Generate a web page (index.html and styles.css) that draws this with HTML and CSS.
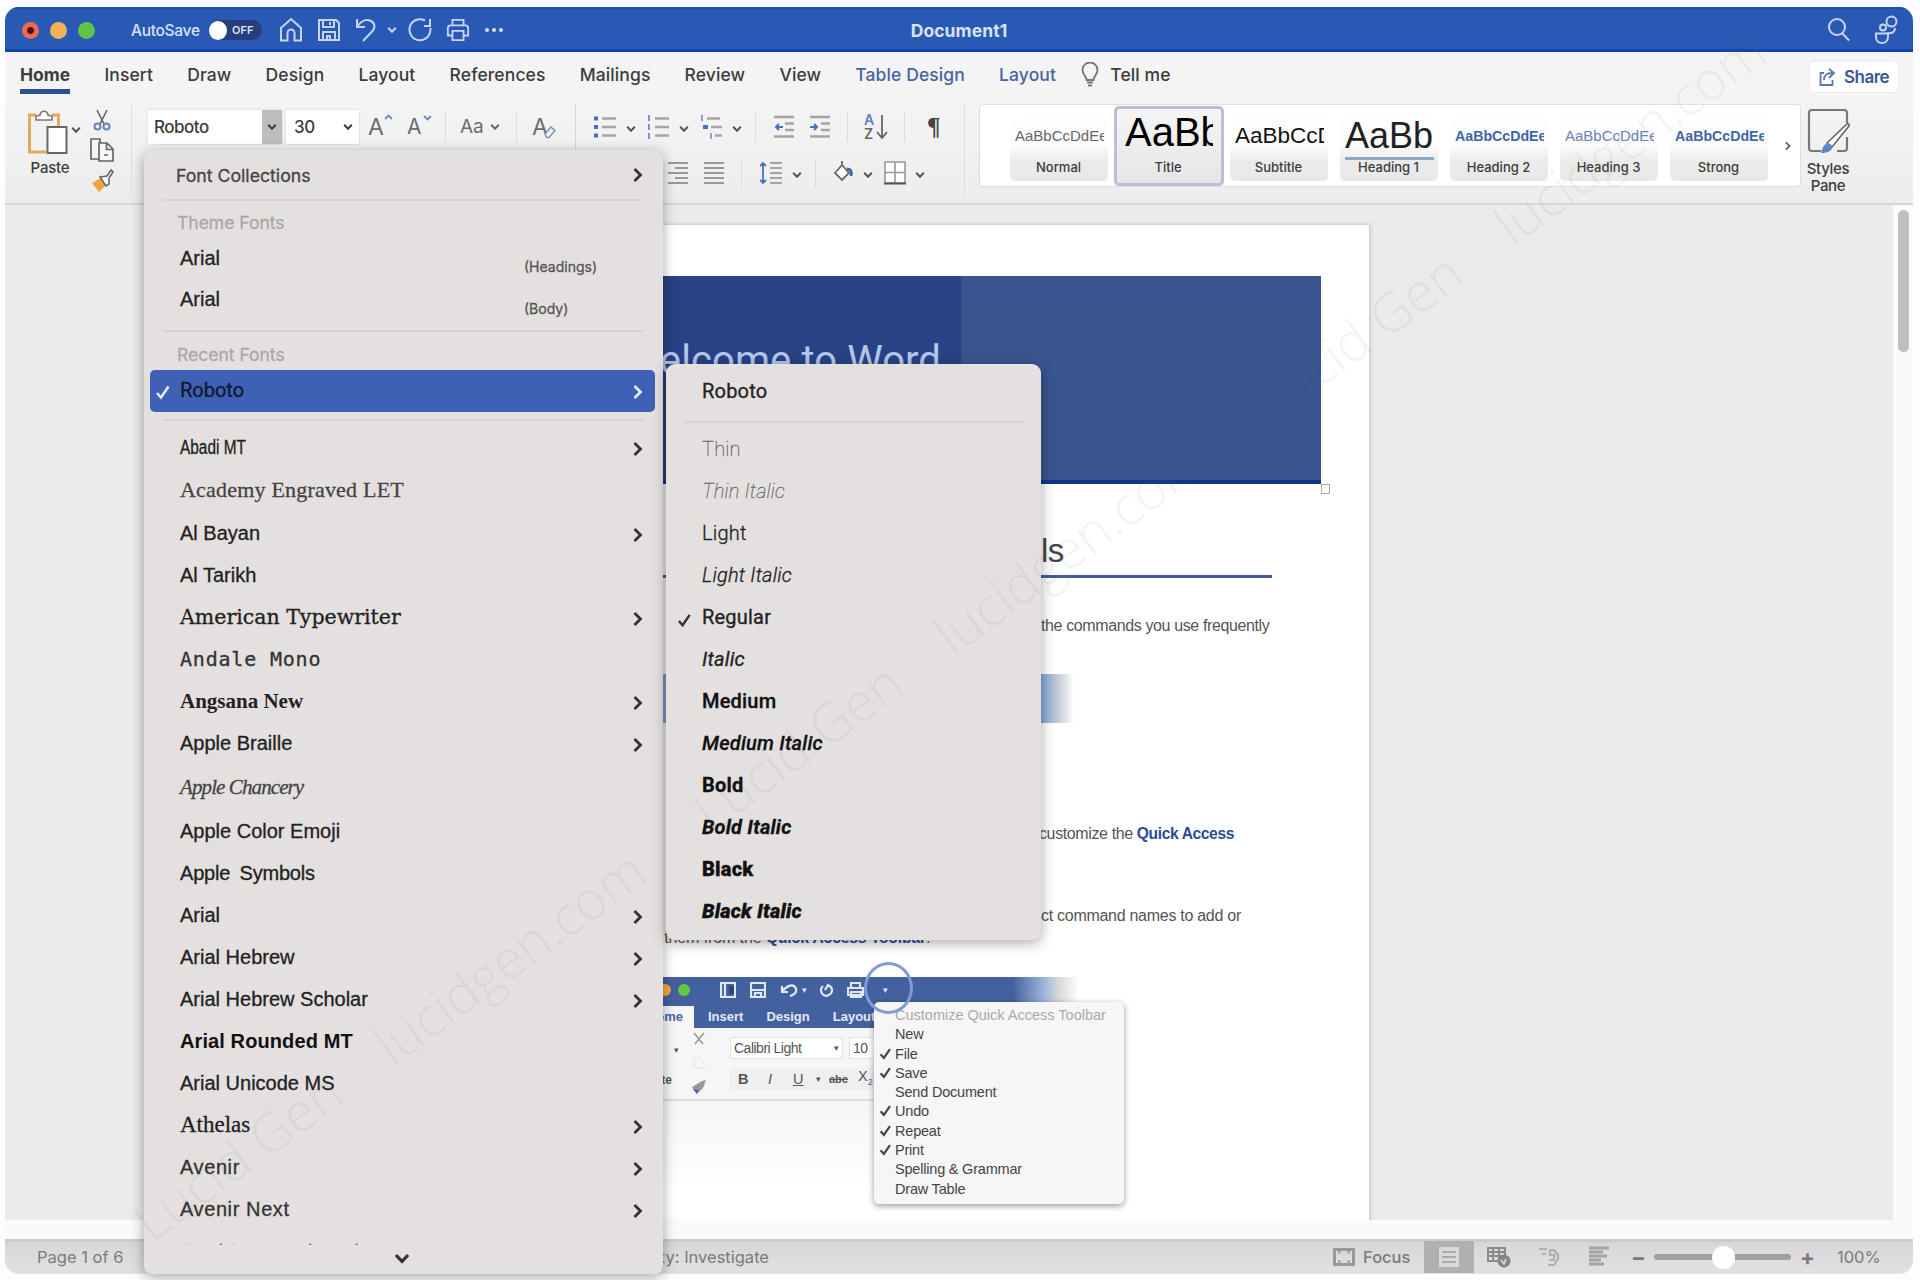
FILE: index.html
```html
<!DOCTYPE html>
<html lang="en">
<head>
    <meta charset="UTF-8">
    <meta name="viewport" content="width=device-width, initial-scale=1.0">
    <title>Document1</title>
    <link rel="stylesheet" href="styles.css">
</head>
<body>
    <!-- Shared icons -->
    <svg class="sprite" xmlns="http://www.w3.org/2000/svg">
        <symbol id="chev" viewBox="0 0 10 8"><path d="M1.2 1.8 5 5.8 8.8 1.8" fill="none" stroke="currentColor" stroke-width="2"/></symbol>
        <symbol id="arrow" viewBox="0 0 10 16"><path d="M1.5 2 7.5 8 1.5 14" fill="none" stroke="currentColor" stroke-width="2.8"/></symbol>
        <symbol id="check" viewBox="0 0 16 16"><path d="M2 9 6 13.5 13.5 2.5" fill="none" stroke="currentColor" stroke-width="2.6"/></symbol>
    </svg>

    <div class="window">
        <!-- Title bar -->
        <div class="titlebar">
            <div class="lights">
                <span class="light red"></span>
                <span class="light yellow"></span>
                <span class="light green"></span>
            </div>
            <span class="autosave">AutoSave</span>
            <span class="toggle"><i></i>OFF</span>
            <div class="quick">
                <svg width="24" height="26" viewBox="0 0 24 26"><path d="M2 11 12 2l10 9v12.500h-6.500V16a3.500 3.500 0 0 0-7 0v7.500H2z"/></svg>
                <svg width="24" height="26" viewBox="0 0 24 26"><path d="M2 3h17l3 3v17H2zM6 3v7h11V3M6 23v-8h12v8M10 23v-4h3v4M13 5v3"/></svg>
                <svg width="22" height="26" viewBox="0 0 22 26"><path d="M2 2v8h8M2.500 9C6 4 11 2 15 3.500c5 2 6 7 2 11L8 24"/></svg>
                <svg class="small" width="10" height="8"><use href="#chev"/></svg>
                <svg width="26" height="26" viewBox="0 0 26 26"><path d="M18 3.500A10.500 10.500 0 1 0 23.300 11M17 9h6V2"/></svg>
                <svg width="24" height="26" viewBox="0 0 26 26"><path d="M7 8V2h12v6M6 19H2V11c0-2 1-3 3-3h16c2 0 3 1 3 3v8h-4M7 14h12v10H7z"/></svg>
                <svg class="dots" width="20" height="6" viewBox="0 0 20 6"><circle cx="3" cy="3" r="2"/><circle cx="10" cy="3" r="2"/><circle cx="17" cy="3" r="2"/></svg>
            </div>
            <h1>Document1</h1>
            <div class="right-icons">
                <svg width="24" height="28" viewBox="0 0 24 28"><circle cx="10" cy="11" r="8"/><path d="m15.500 17.500 6.500 7"/></svg>
                <svg width="26" height="32" viewBox="0 0 26 32"><circle cx="18.500" cy="7.500" r="5"/><circle cx="10" cy="13.500" r="3"/><path d="M3 19.500h12V23c0 8-12 8-12 0zM14 19c5 1 8-1 8-5"/></svg>
            </div>
        </div>

        <!-- Ribbon tabs -->
        <div class="tabs">
            <span class="tab active">Home</span>
            <span class="tab">Insert</span>
            <span class="tab">Draw</span>
            <span class="tab">Design</span>
            <span class="tab">Layout</span>
            <span class="tab">References</span>
            <span class="tab">Mailings</span>
            <span class="tab">Review</span>
            <span class="tab">View</span>
            <span class="tab context">Table Design</span>
            <span class="tab context">Layout</span>
            <svg class="bulb" width="18" height="26" viewBox="0 0 18 26"><path d="M5.500 18c0-4-4-5-4-10a7.500 7.500 0 0 1 15 0c0 5-4 6-4 10zM6 20.500h6M7 23.500h4"/></svg>
            <span class="tell">Tell me</span>
            <button class="share">
                <svg width="18" height="20" viewBox="0 0 18 20"><path d="M5 6H1.500v12h12v-5M5 13c0-5 3-7 8-7M10 2l5 4-5 5"/></svg>
                Share
            </button>
        </div>

        <!-- Ribbon -->
        <div class="ribbon">
            <div class="clipboard">
                <div class="paste">
                    <svg width="40" height="46" viewBox="0 0 40 46"><path d="M8 6H1.500v37H18M24 6h6.500v11" fill="none" stroke="#e0a95d" stroke-width="3"/><path d="M8 11V7l4-1c1-5 7-5 8 0l4 1v4z" fill="#fff" stroke="#777" stroke-width="1.600"/><path d="M19.500 18h19v26h-19z" fill="#fff" stroke="#666" stroke-width="2"/></svg>
                    <span>Paste</span>
                </div>
                <svg class="chev" width="10" height="8"><use href="#chev"/></svg>
                <div class="clip-tools">
                    <svg width="18" height="22" viewBox="0 0 18 22"><path d="M4 1l7.500 15M14 1 6.500 16" fill="none" stroke="#666" stroke-width="1.600"/><circle cx="4.500" cy="17.500" r="3" fill="none" stroke="#6684c4" stroke-width="2"/><circle cx="13.500" cy="17.500" r="3" fill="none" stroke="#6684c4" stroke-width="2"/></svg>
                    <svg width="24" height="26" viewBox="0 0 24 26" fill="#f6f6f6" stroke="#666" stroke-width="1.700"><path d="M9 22H1V2h9v4"/><path d="M9 6h8l6 6v12H9zM16.500 6v6.500H23M14 18h4"/></svg>
                    <svg width="24" height="24" viewBox="0 0 24 24"><path d="M2 14l9-5 5 7-7 7z" fill="#eda53f"/><path d="m10 8 7-1 4-6 2 2-4 6v6l-3 2z" fill="#fff" stroke="#666" stroke-width="1.600"/></svg>
                </div>
            </div>

            <div class="font-group">
                <div class="combo font-name"><span>Roboto</span><i><svg width="10" height="8"><use href="#chev"/></svg></i></div>
                <div class="combo font-size"><span>30</span><svg width="10" height="8"><use href="#chev"/></svg></div>
                <span class="letter grow">A<svg width="9" height="6" viewBox="0 0 9 6"><path d="M1 5 4.500 1.500 8 5"/></svg></span>
                <span class="letter shrink">A<svg width="9" height="6" viewBox="0 0 9 6"><path d="M1 1 4.500 4.500 8 1"/></svg></span>
                <i class="sep"></i>
                <span class="letter case">Aa<svg width="10" height="8"><use href="#chev"/></svg></span>
                <i class="sep"></i>
                <span class="letter clear">A<svg width="12" height="14" viewBox="0 0 12 14"><path d="m1 9 6-7 4 3.500-6 7H2.500z" fill="#f1f1f1" stroke="#7c91ba" stroke-width="1.500"/></svg></span>
            </div>

            <div class="para-group">
                <div class="tools">
                    <svg width="22" height="24" viewBox="0 0 22 24"><path d="M8 3.500h14M8 12h14M8 20.500h14" stroke="#a5a5a5" stroke-width="2.600"/><path d="M0 3.500h4M0 12h4M0 20.500h4" stroke="#4a6fc0" stroke-width="4"/></svg>
                    <svg class="chev" width="10" height="8"><use href="#chev"/></svg>
                    <svg width="22" height="24" viewBox="0 0 22 24"><path d="M8 3.500h14M8 12h14M8 20.500h14" stroke="#a5a5a5" stroke-width="2.600"/><path d="M2 0v6M2 9v6M2 18v6" stroke="#7f94c4" stroke-width="2"/></svg>
                    <svg class="chev" width="10" height="8"><use href="#chev"/></svg>
                    <svg width="22" height="24" viewBox="0 0 22 24"><path d="M7 3.500h13M11 12h11M15 20.500h7" stroke="#a5a5a5" stroke-width="2.600"/><path d="M2 0v6M11 18v6" stroke="#8fa2c9" stroke-width="2"/><path d="M3 12h5" stroke="#4a6fc0" stroke-width="4"/></svg>
                    <svg class="chev" width="10" height="8"><use href="#chev"/></svg>
                    <i class="sep s1"></i>
                    <svg width="20" height="24" viewBox="0 0 20 24"><path d="M0 2h20M11 8.500h9M11 15h9M0 21.500h20" stroke="#a5a5a5" stroke-width="2.400"/><path d="M9 12H2m3-3-3 3 3 3" fill="none" stroke="#4a6fc0" stroke-width="2"/></svg>
                    <svg class="m16" width="20" height="24" viewBox="0 0 20 24"><path d="M0 2h20M11 8.500h9M11 15h9M0 21.500h20" stroke="#a5a5a5" stroke-width="2.400"/><path d="M0 12h7M4 9l3 3-3 3" fill="none" stroke="#4a6fc0" stroke-width="2"/></svg>
                    <i class="sep s2"></i>
                    <span class="sort"><span class="letters"><b>A</b><b class="z">Z</b></span><svg width="12" height="26" viewBox="0 0 12 26"><path d="M6 1v22M1 18l5 6 5-6" fill="none" stroke="#666" stroke-width="1.800"/></svg></span>
                    <i class="sep s3"></i>
                    <span class="pilcrow">¶</span>
                </div>
                <div class="tools second">
                    <svg width="20" height="24" viewBox="0 0 20 24"><path d="M0 2h20M0 7h13M0 12h20M0 17h13M0 22h20" stroke="#999" stroke-width="2.200"/></svg>
                    <svg class="m17" width="20" height="24" viewBox="0 0 20 24"><path d="M0 2h20M3 7h14M0 12h20M3 17h14M0 22h20" stroke="#999" stroke-width="2.200"/></svg>
                    <svg class="m17" width="20" height="24" viewBox="0 0 20 24"><path d="M0 2h20M7 7h13M0 12h20M7 17h13M0 22h20" stroke="#999" stroke-width="2.200"/></svg>
                    <svg class="m16" width="20" height="24" viewBox="0 0 20 24"><path d="M0 2h20M0 7h20M0 12h20M0 17h20M0 22h20" stroke="#999" stroke-width="2.200"/></svg>
                    <i class="sep s2"></i>
                    <svg class="m18" width="22" height="24" viewBox="0 0 22 24"><path d="M10 2h12M10 7h12M10 12h12M10 17h12M10 22h12" stroke="#a5a5a5" stroke-width="2.200"/><path d="M3 2v20M0 5l3-3 3 3M0 19l3 3 3-3" fill="none" stroke="#4a6fc0" stroke-width="1.800"/></svg>
                    <svg class="chev" width="10" height="8"><use href="#chev"/></svg>
                    <i class="sep s4"></i>
                    <svg class="m16" width="24" height="24" viewBox="0 0 24 24"><path d="m3 12 7-8 7 8-7 7zM10 4V0" fill="#fff" stroke="#666" stroke-width="1.800"/><path d="M15 8c4 0 5 3 4 7" fill="none" stroke="#4a62a8" stroke-width="2.800"/></svg>
                    <svg class="chev c2" width="10" height="8"><use href="#chev"/></svg>
                    <svg class="m11" width="22" height="24" viewBox="0 0 22 24"><path d="M1 1h20v21H1z" fill="#fff" stroke="#999" stroke-width="1.600"/><path d="M11 1v21M1 11.500h20" stroke="#999" stroke-width="1.600"/><path d="M0 22.500h22" stroke="#555" stroke-width="2"/></svg>
                    <svg class="chev c3" width="10" height="8"><use href="#chev"/></svg>
                </div>
            </div>

            <!-- Style gallery -->
            <div class="gallery">
                <div class="style"><div class="sample normal">AaBbCcDdEe</div><p>Normal</p></div>
                <div class="style selected"><div class="sample title">AaBb</div><p>Title</p></div>
                <div class="style"><div class="sample subtitle">AaBbCcD</div><p>Subtitle</p></div>
                <div class="style"><div class="sample h1">AaBbC</div><p>Heading 1</p></div>
                <div class="style"><div class="sample h2">AaBbCcDdEe</div><p>Heading 2</p></div>
                <div class="style"><div class="sample h3">AaBbCcDdEe</div><p>Heading 3</p></div>
                <div class="style"><div class="sample strong">AaBbCcDdEe</div><p>Strong</p></div>
                <svg class="more" width="6" height="12"><use href="#arrow"/></svg>
            </div>
            <div class="styles-pane">
                <svg width="44" height="46" viewBox="0 0 44 46"><path d="M14 43H5q-3 0-3-3V5q0-3 3-3h32q3 0 3 3v10M30 43h7q3 0 3-3V29" fill="none" stroke="#777" stroke-width="2.200"/><path d="m20 35 20-19q3-1 2 2L25 39z" fill="#fff" stroke="#666" stroke-width="1.600"/><path d="M14 45c2-8 5-11 9-9s3 9-9 9z" fill="#5d86cd"/></svg>
                <span>Styles<br>Pane</span>
            </div>
        </div>

        <!-- Document -->
        <div class="workspace">
            <div class="canvas">
                <div class="page">
                    <div class="banner">
                        <div class="banner-left">Welcome to Word</div>
                        <span class="handle"></span>
                    </div>
                    <div class="doc-heading">ls</div>
                    <p class="copy first">the commands you use frequently</p>
                    <div class="strip"></div>
                    <p class="copy second-copy">customize the <b>Quick Access</b></p>
                    <p class="copy third">ct command names to add or</p>
                    <p class="copy fourth">e them from the <b>Quick Access Toolbar</b>.</p>

                    <!-- Toolbar illustration -->
                    <div class="mini">
                        <div class="mini-bar">
                            <span class="mini-light orange"></span>
                            <span class="mini-light lime"></span>
                            <svg class="m-new" width="16" height="16" viewBox="0 0 16 16"><path d="M1 1h14v14H1zM5 1v14" /><path d="M9 4h5v8H9z" fill="#2c4580" stroke="none"/></svg>
                            <svg class="m14" width="16" height="16" viewBox="0 0 16 16"><path d="M1 1h14v14H1zM1 8h14M5 15v-4h6v4"/></svg>
                            <svg class="m14" width="18" height="14" viewBox="0 0 18 14"><path d="M2 3v6h6M2 9C7 2 14 0 16 6c1 3-2 6-6 7"/></svg>
                            <i>▾</i>
                            <svg class="m12" width="14" height="16" viewBox="0 0 14 16"><path d="M9 3a5.500 5.500 0 1 1-5 1M6 8l3-5 4 3"/></svg>
                            <svg class="m14" width="18" height="16" viewBox="0 0 18 16"><path d="M4 6V1h9v5M1 6h15v7H1zM4 10h10v5H4z"/></svg>
                            <i class="drop">▾</i>
                        </div>
                        <div class="mini-tabs">
                            <span class="home">Home</span><span>Insert</span><span>Design</span><span>Layout</span>
                        </div>
                        <div class="mini-ribbon">
                            <div class="mini-clip"><span>▾</span><span class="te">te</span></div>
                            <div class="mini-cut">
                                <svg width="14" height="14" viewBox="0 0 14 14"><path d="M2 1l9 11M12 1 3 12" stroke="#999" stroke-width="1.600"/></svg>
                                <svg width="14" height="14" viewBox="0 0 14 14"><path d="M2 2h6l4 4v6H2z" fill="none" stroke="#e0e0e0"/></svg>
                                <svg width="16" height="14" viewBox="0 0 16 14"><path d="m1 7 10-6 4-1-3 8-6 6z" fill="#999"/><path d="m2 9 6 1-2 4z" fill="#4b67b5"/></svg>
                            </div>
                            <div class="mini-fields">
                                <div class="mini-row"><span class="mini-font">Calibri Light<i>▾</i></span><span class="mini-size">10</span></div>
                                <div class="mini-row buttons"><b>B</b><em>I</em><u>U</u><i>▾</i><s>abc</s><span>X<sub>2</sub></span></div>
                            </div>
                        </div>
                        <span class="ring"></span>
                        <div class="mini-menu">
                            <p class="head">Customize Quick Access Toolbar</p>
                            <p>New</p>
                            <p><svg width="13" height="13"><use href="#check"/></svg>File</p>
                            <p><svg width="13" height="13"><use href="#check"/></svg>Save</p>
                            <p>Send Document</p>
                            <p><svg width="13" height="13"><use href="#check"/></svg>Undo</p>
                            <p><svg width="13" height="13"><use href="#check"/></svg>Repeat</p>
                            <p><svg width="13" height="13"><use href="#check"/></svg>Print</p>
                            <p>Spelling &amp; Grammar</p>
                            <p>Draw Table</p>
                        </div>
                    </div>
                </div>
            </div>
            <div class="scrollbar"><div class="thumb"></div></div>
        </div>

        <!-- Status bar -->
        <div class="statusbar">
            <span class="pages">Page 1 of 6</span>
            <span class="access">Accessibility: Investigate</span>
            <div class="views">
                <svg width="22" height="18" viewBox="0 0 22 18"><path d="M1.500 1.500h19v15h-19z" fill="none" stroke="#999" stroke-width="3"/><path d="M6 6V4h2M14 4h2v2M16 12v2h-2M8 14H6v-2" fill="none" stroke="#aaa" stroke-width="2"/></svg>
                <span class="focus">Focus</span>
                <span class="view on"><svg width="22" height="22" viewBox="0 0 22 22"><path d="M1 1h20v20H1z" fill="#d9d9d9"/><path d="M4 6h14M4 11h14M4 16h14" stroke="#aaa" stroke-width="2"/></svg></span>
                <span class="view"><svg width="24" height="22" viewBox="0 0 24 22"><path d="M1 2h17v13H1zM1 6h17M6 2v13M12 2v13M1 10h17" fill="none" stroke="#8b8b8b" stroke-width="2"/><circle cx="17" cy="15" r="6.500" fill="#858585"/><path d="m14 14 3 4 2-5" fill="none" stroke="#ddd" stroke-width="1.600"/></svg></span>
                <span class="view"><svg width="22" height="20" viewBox="0 0 22 20"><path d="M1 2h8M4 7h4M12 3h4l4 5v4l-4 6h-6M12 3v5h4v5h-5" fill="none" stroke="#b0b0b0" stroke-width="2.200"/></svg></span>
                <span class="view"><svg width="20" height="22" viewBox="0 0 20 22"><path d="M0 2h20M0 6h14M0 10h18M0 14h12M0 18h15" stroke="#a3a3a3" stroke-width="3"/></svg></span>
            </div>
            <span class="minus">−</span>
            <div class="slider"><i></i></div>
            <span class="plus">+</span>
            <span class="zoom">100%</span>
        </div>
    </div>

    <!-- Font menu -->
    <div class="menu font-menu">
        <div class="item first-item">Font Collections<svg width="10" height="16"><use href="#arrow"/></svg></div>
        <hr>
        <div class="item label theme">Theme Fonts</div>
        <div class="item theme-row">Arial<small>(Headings)</small></div>
        <div class="item theme-row body-row">Arial<small>(Body)</small></div>
        <hr class="wide">
        <div class="item label recent">Recent Fonts</div>
        <div class="item active"><svg class="tick" width="16" height="16"><use href="#check"/></svg>Roboto<svg width="10" height="16"><use href="#arrow"/></svg></div>
        <hr class="mid">
        <div class="item tall"><span class="narrow">Abadi MT</span><svg width="10" height="16"><use href="#arrow"/></svg></div>
        <div class="item tall f-academy">Academy Engraved LET</div>
        <div class="item">Al Bayan<svg width="10" height="16"><use href="#arrow"/></svg></div>
        <div class="item">Al Tarikh</div>
        <div class="item f-typewriter">American Typewriter<svg width="10" height="16"><use href="#arrow"/></svg></div>
        <div class="item f-mono">Andale Mono</div>
        <div class="item f-angsana">Angsana New<svg width="10" height="16"><use href="#arrow"/></svg></div>
        <div class="item">Apple Braille<svg width="10" height="16"><use href="#arrow"/></svg></div>
        <div class="item f-chancery">Apple Chancery</div>
        <div class="item">Apple Color Emoji</div>
        <div class="item f-symbols">Apple Symbols</div>
        <div class="item">Arial<svg width="10" height="16"><use href="#arrow"/></svg></div>
        <div class="item">Arial Hebrew<svg width="10" height="16"><use href="#arrow"/></svg></div>
        <div class="item">Arial Hebrew Scholar<svg width="10" height="16"><use href="#arrow"/></svg></div>
        <div class="item f-rounded">Arial Rounded MT</div>
        <div class="item">Arial Unicode MS</div>
        <div class="item f-athelas">Athelas<svg width="10" height="16"><use href="#arrow"/></svg></div>
        <div class="item f-avenir">Avenir<svg width="10" height="16"><use href="#arrow"/></svg></div>
        <div class="item f-avenir">Avenir Next<svg width="10" height="16"><use href="#arrow"/></svg></div>
        <div class="item cut">Avenir Next Condensed</div>
        <div class="scroll-down"><svg width="16" height="13"><use href="#chev"/></svg></div>
    </div>

    <!-- Typeface submenu -->
    <div class="menu sub-menu">
        <div class="item">Roboto</div>
        <hr>
        <div class="item thin">Thin</div>
        <div class="item thin it">Thin Italic</div>
        <div class="item light-face">Light</div>
        <div class="item light-face it">Light Italic</div>
        <div class="item"><svg class="tick" width="15" height="16"><use href="#check"/></svg>Regular</div>
        <div class="item it">Italic</div>
        <div class="item medium">Medium</div>
        <div class="item medium it">Medium Italic</div>
        <div class="item bold">Bold</div>
        <div class="item bold it">Bold Italic</div>
        <div class="item black">Black</div>
        <div class="item black it">Black Italic</div>
    </div>

    <div class="watermark">
        <span>Lucid Gen</span><span class="site">lucidgen.com</span>
        <span>Lucid Gen</span><span class="site">lucidgen.com</span>
        <span>Lucid Gen</span><span class="site">lucidgen.com</span>
    </div>
</body>
</html>
```

FILE: styles.css
```css
/* General Styles */
* {
    box-sizing: border-box;
}

body {
    margin: 0;
    width: 1920px;
    height: 1280px;
    overflow: hidden;
    position: relative;
    background: #fcfdff;
    font-family: Inter, "Liberation Sans", sans-serif;
    color: #3c3c3c;
}

p {
    margin: 0;
}

svg {
    flex: none;
}

.sprite {
    position: absolute;
    width: 0;
    height: 0;
}

.window {
    display: flex;
    flex-direction: column;
    width: 1908px;
    height: 1267px;
    margin: 7px 0 0 5px;
    border-radius: 14px;
    overflow: hidden;
    background: #f1f1f1;
}

/* Title bar */
.titlebar {
    position: relative;
    display: flex;
    align-items: center;
    height: 45px;
    padding: 2px 0 0 17px;
    background: #2859b4;
    border-top: 2px solid #1c52ae;
    border-bottom: 3px solid #0f47ac;
    color: #d9e3f6;
}

.lights {
    display: flex;
    gap: 11px;
    width: 109px;
}

.light {
    width: 17px;
    height: 17px;
    border-radius: 50%;
}

.light.red {
    background: radial-gradient(circle, #4a1410 3px, #ec6b52 4px);
}

.light.yellow {
    background: #f3b25a;
}

.light.green {
    background: #5fc447;
}

.autosave {
    width: 78px;
    font-size: 15.5px;
    font-weight: 500;
    letter-spacing: -0.3px;
}

.toggle {
    display: flex;
    align-items: center;
    gap: 5px;
    width: 53px;
    height: 20px;
    border-radius: 10px;
    background: #263f7c;
    font-size: 11px;
    font-weight: 600;
}

.toggle i {
    width: 18px;
    height: 19px;
    border-radius: 50%;
    background: #fff;
}

.quick {
    display: flex;
    align-items: center;
    padding-left: 17px;
    gap: 14px;
}

.quick svg, .right-icons svg {
    fill: none;
    stroke: #c6d5f2;
    stroke-width: 2;
}

.quick .small {
    margin-left: -4px;
    margin-right: -4px;
    color: #c6d5f2;
}

.quick .small + svg {
    margin-right: -1px;
}

.quick .dots {
    fill: #d5e0f5;
    stroke: none;
}

.titlebar h1 {
    position: absolute;
    left: 0;
    right: 0;
    margin: 0;
    text-align: center;
    font-size: 17.5px;
    font-weight: 700;
    letter-spacing: 0.1px;
}

.right-icons {
    display: flex;
    align-items: center;
    gap: 22px;
    margin-left: auto;
    padding-right: 14px;
}

/* Tabs */
.tabs {
    display: flex;
    align-items: flex-start;
    height: 46px;
    padding-left: 15px;
    background: #f4f4f4;
}

.tab, .tell {
    height: 42px;
    margin-right: 34.2px;
    padding-top: 11px;
    font-size: 17.5px;
    line-height: 24px;
    font-weight: 500;
    letter-spacing: 0.1px;
    white-space: nowrap;
}

.tab.active {
    font-weight: 700;
    border-bottom: 5px solid #2c4f94;
    letter-spacing: 0;
}

.tab.context {
    color: #4862a3;
}

.bulb {
    margin: 10px 11px 0 -9px;
    fill: none;
    stroke: #777;
    stroke-width: 1.8;
}

.share {
    display: flex;
    align-items: center;
    gap: 7px;
    width: 90px;
    height: 32px;
    margin: 9px 14px 0 auto;
    padding: 0 0 0 9px;
    border: 1px solid #ececec;
    border-radius: 4px;
    background: #fff;
    color: #3b5998;
    font-family: inherit;
    font-size: 17px;
    font-weight: 600;
    letter-spacing: -0.5px;
}

.share svg {
    fill: none;
    stroke: #5a78b8;
    stroke-width: 1.8;
}

/* Ribbon */
.ribbon {
    display: flex;
    align-items: flex-start;
    height: 107px;
    padding-top: 6px;
    background: linear-gradient(#f4f4f4, #ededed);
    border-bottom: 2px solid #d6d6d6;
}

.clipboard {
    display: flex;
    width: 127px;
    height: 92px;
    padding-left: 21px;
    border-right: 1px solid #dedede;
}

.paste {
    display: flex;
    flex-direction: column;
    align-items: center;
    width: 44px;
    padding-top: 5px;
    font-size: 15px;
    font-weight: 500;
    letter-spacing: -0.2px;
}

.paste span {
    margin: 3px 0 0 4px;
}

.chev {
    color: #555;
}

.clipboard .chev {
    margin: 22px 9px 0 1px;
}

.clip-tools {
    display: flex;
    flex-direction: column;
    align-items: center;
    gap: 6px;
    padding-top: 5px;
}

.font-group {
    display: flex;
    align-items: center;
    height: 46px;
    width: 444px;
    padding-left: 16px;
    border-right: 1px solid #d6d6d6;
}

.combo {
    display: flex;
    align-items: center;
    justify-content: space-between;
    height: 34px;
    background: #fff;
    font-size: 17px;
    font-weight: 500;
    letter-spacing: -0.5px;
    box-shadow: 0 0 2px #ccc;
}

.font-name {
    width: 134px;
    padding-left: 6px;
}

.font-name i {
    display: flex;
    align-items: center;
    justify-content: center;
    width: 20px;
    height: 34px;
    background: #bdbdbd;
}

.font-size {
    width: 73px;
    margin-left: 4px;
    padding: 0 6px 0 8px;
}

.letter {
    position: relative;
    font-size: 23px;
    color: #6b6b6b;
    line-height: 30px;
}

.grow svg, .shrink svg {
    position: absolute;
    left: 24px;
    top: 3px;
    fill: none;
    stroke: #6c8ac8;
    stroke-width: 1.8;
}

.grow {
    width: 40px;
    padding-left: 9px;
}

.grow svg {
    left: 25px;
    top: 2px;
}

.shrink {
    width: 38px;
    padding-left: 8px;
    font-size: 21px;
}

.sep {
    width: 1px;
    height: 30px;
    margin: 0 8px;
    background: #dcdcdc;
}

.case {
    width: 54px;
    padding-left: 6px;
    font-size: 19px;
    white-space: nowrap;
}

.case svg {
    margin-left: 6px;
    vertical-align: 2px;
}

.clear {
    padding-left: 7px;
}

.clear svg {
    position: absolute;
    left: 19px;
    top: 13px;
}

.para-group {
    width: 389px;
    height: 92px;
    padding-left: 18px;
    border-right: 1px solid #dcdcdc;
}

.tools {
    display: flex;
    align-items: center;
    height: 46px;
}

.tools .chev {
    margin: 3px 11px 0 10px;
}

.tools .chev.c2 {
    margin: 3px 0 0 7px;
}

.tools .chev.c3 {
    margin: 3px 0 0 9px;
}

.tools .sep {
    margin: 0;
}

.tools .s1 {
    margin: 0 18px 0 2px;
}

.tools .s2 {
    margin-left: 17px;
}

.tools .s3 {
    margin: 0 22px 0 16px;
}

.tools .s4 {
    margin-left: 2px;
}

.m12 {
    margin-left: 12px;
}

.m14 {
    margin-left: 14px;
}

.m16 {
    margin-left: 16px;
}

.m17 {
    margin-left: 17px;
}

.m18 {
    margin-left: 18px;
}

.m11 {
    margin-left: 11px;
}

.sort {
    display: flex;
    align-items: center;
    margin-left: 16px;
    font-size: 14px;
    line-height: 14px;
}

.sort .letters {
    width: 12px;
}

.sort b {
    display: block;
    height: 14px;
    font-weight: 600;
    color: #5f80c2;
}

.sort .z {
    color: #666;
}

.pilcrow {
    font-family: "Liberation Serif", serif;
    font-size: 25px;
    font-weight: 700;
    color: #444;
}

/* Style gallery */
.gallery {
    display: flex;
    align-items: center;
    width: 822px;
    height: 83px;
    margin-left: 14px;
    padding-left: 30px;
    border: 1px solid #dedede;
    border-radius: 4px;
    background: #fff;
}

.style {
    display: flex;
    flex-direction: column;
    width: 98px;
    height: 71px;
    margin-right: 12px;
    padding: 0 4px 0 5px;
    border-radius: 5px;
    background: linear-gradient(#fff, #fcfcfc 50%, #ebebeb 72%, #e9e9e9);
}

.style.selected {
    width: 110px;
    height: 80px;
    margin: 0 6px 0 -6px;
    padding: 0 8px 2px 8px;
    border: 3px solid #b9bfd6;
    background: linear-gradient(#f5f5f5, #e6e6e6);
}

.style p {
    height: 26px;
    margin-left: -2px;
    text-align: center;
    font-size: 13px;
    font-weight: 500;
    line-height: 25px;
    white-space: nowrap;
}

.sample {
    flex: 1;
    overflow: hidden;
    white-space: nowrap;
    font-family: "Liberation Sans", Arial, sans-serif;
    font-size: 15px;
    line-height: 52px;
    color: #222;
}

.sample.normal {
    color: #666;
}

.sample.title {
    font-size: 40px;
    line-height: 47px;
    color: #000;
}

.sample.subtitle {
    font-size: 22.5px;
    color: #111;
}

.sample.h1 {
    flex: none;
    height: 50px;
    margin-bottom: -5px;
    font-size: 36px;
    line-height: 52px;
    border-bottom: 3px solid #8fa5c9;
}

.sample.h2, .sample.strong {
    font-weight: 700;
    font-size: 14.2px;
    color: #4264a8;
}

.sample.h3 {
    color: #6882b8;
}

.more {
    margin-left: 5px;
    color: #555;
}

.styles-pane {
    display: flex;
    flex-direction: column;
    align-items: center;
    width: 54px;
    padding-top: 4px;
    text-align: center;
    font-size: 15px;
    font-weight: 500;
    line-height: 17px;
    letter-spacing: -0.3px;
}

.styles-pane svg {
    margin-left: 2px;
}

.styles-pane span {
    margin-top: 6px;
}

/* Document */
.workspace {
    display: flex;
    height: 1034px;
    background: #fafafa;
}

.canvas {
    width: 1888px;
    height: 1015px;
    overflow: hidden;
    background: #ebebeb;
}

.page {
    width: 842px;
    height: 1020px;
    margin: 19px 0 0 523px;
    padding-top: 51px;
    background: #fff;
    border: 1px solid #d4d4d4;
    box-shadow: 1px 0 3px #ccc;
    font-family: "Liberation Sans", Arial, sans-serif;
}

.banner {
    position: relative;
    width: 752px;
    height: 208px;
    margin-left: 40px;
    background: #39558f;
    border-bottom: 4px solid #0f3784;
}

.banner-left {
    width: 392px;
    height: 204px;
    padding: 63px 20px 0 0;
    background: #284385;
    color: #b4c8ec;
    text-align: right;
    font-family: Roboto, sans-serif;
    font-size: 40px;
    font-weight: 400;
    line-height: 44px;
    letter-spacing: 0.1px;
    white-space: nowrap;
}

.handle {
    position: absolute;
    right: -9px;
    bottom: -14px;
    width: 9px;
    height: 10px;
    border: 1.5px solid #aaa;
}

.doc-heading {
    width: 703px;
    height: 94px;
    margin-left: 40px;
    padding: 48px 0 0 472px;
    border-bottom: 3px solid #405d97;
    font-size: 33px;
    line-height: 38px;
    letter-spacing: -0.5px;
    color: #444;
}

.copy {
    height: 22px;
    margin-left: 512px;
    font-size: 16px;
    line-height: 22px;
    letter-spacing: -0.38px;
    white-space: nowrap;
    color: #555;
}

.copy b {
    font-size: 15.6px;
    color: #2e4c96;
}

.first {
    margin-top: 37px;
}

.strip {
    width: 505px;
    height: 49px;
    margin: 37px 0 0 40px;
    background: linear-gradient(90deg, #8ba9dc 94%, #c9cdd6 97%, #fff);
}

.second-copy {
    margin-top: 100px;
    margin-left: 510px;
}

.third {
    margin-top: 60px;
    letter-spacing: -0.28px;
}

.fourth {
    margin: 0 0 28px 122px;
    letter-spacing: -0.1px;
}

/* Toolbar illustration */
.mini {
    position: relative;
    width: 550px;
    height: 250px;
    margin-left: 40px;
    background: linear-gradient(#f3f3f3 40%, #fff 85%);
    background-size: 306px 100%;
    background-repeat: no-repeat;
    font-size: 14px;
}

.mini-bar {
    display: flex;
    align-items: center;
    width: 510px;
    height: 29px;
    padding: 0 0 3px 90px;
    background: linear-gradient(90deg, #44619f 87%, #9bb3da 93%, #d8d8d8 96%, #fff);
    color: #dfe7f5;
}

.mini-bar svg {
    fill: none;
    stroke: #dfe7f5;
    stroke-width: 2.2;
}

.mini-bar i, .buttons i, .mini-font i {
    font-size: 9px;
    font-style: normal;
}

.mini-bar i {
    margin: 0 2px 0 4px;
}

.mini-bar .m12 {
    margin-left: 10px;
}

.mini-bar .drop {
    margin-left: 18px;
    z-index: 2;
}

.mini-light {
    width: 12px;
    height: 12px;
    margin-right: 7px;
    border-radius: 50%;
}

.orange {
    background: #f2a93c;
}

.lime {
    background: #5fc93f;
}

.m-new {
    margin-left: 23px;
}

.mini-tabs {
    display: flex;
    gap: 23px;
    width: 306px;
    height: 22px;
    background: #44619f;
    color: #e3e9f5;
    font-weight: 700;
    font-size: 13px;
    line-height: 22px;
    overflow: hidden;
}

.mini-tabs span {
    flex: none;
}

.mini-tabs .home {
    width: 125px;
    margin-right: -9px;
    padding-right: 11px;
    background: #f6f6f6;
    color: #4764a5;
    text-align: right;
}

.mini-ribbon {
    display: flex;
    width: 306px;
    height: 73px;
    background: #f6f6f6;
    border-bottom: 2px solid #ddd;
    color: #555;
}

.mini-clip {
    display: flex;
    flex-direction: column;
    align-items: flex-end;
    justify-content: space-between;
    width: 110px;
    padding: 17px 0 12px;
    font-size: 9px;
}

.mini-clip .te {
    margin-right: 7px;
    font-size: 12px;
    font-weight: 700;
}

.mini-cut {
    display: flex;
    flex-direction: column;
    align-items: center;
    gap: 10px;
    width: 40px;
    padding-top: 4px;
}

.mini-fields {
    width: 156px;
    padding: 9px 0 0 11px;
}

.mini-row {
    display: flex;
    gap: 6px;
    height: 22px;
    line-height: 20px;
}

.mini-font {
    display: flex;
    justify-content: space-between;
    width: 113px;
    padding: 0 4px 0 3px;
    background: #fff;
    border: 1px solid #e2e2e2;
    letter-spacing: -0.5px;
}

.mini-size {
    flex: 1;
    padding-left: 3px;
    background: #fff;
    border: 1px solid #e2e2e2;
    letter-spacing: -0.5px;
}

.buttons {
    align-items: center;
    gap: 0;
    margin-top: 9px;
    padding: 0 0 0 8px;
    background: #efefef;
    font-size: 14.5px;
    overflow: hidden;
}

.buttons b {
    width: 30px;
}

.buttons em {
    width: 25px;
}

.buttons u {
    width: 23px;
}

.buttons i {
    width: 13px;
}

.buttons s {
    width: 29px;
    font-size: 11px;
    font-weight: 700;
}

.buttons sub {
    font-size: 9px;
    color: #4b67b5;
}

.ring {
    position: absolute;
    left: 295px;
    top: -15px;
    width: 49px;
    height: 52px;
    border: 3px solid #7f9dd3;
    border-radius: 50%;
    z-index: 1;
}

.mini-menu {
    position: absolute;
    left: 305px;
    top: 25px;
    width: 250px;
    height: 202px;
    padding-top: 3px;
    border-radius: 5px;
    background: #f6f6f6;
    box-shadow: 0 2px 6px rgba(0, 0, 0, 0.4);
    color: #444;
}

.mini-menu p {
    position: relative;
    height: 19.3px;
    padding-left: 21px;
    font-size: 14.5px;
    line-height: 20px;
    letter-spacing: -0.2px;
    white-space: nowrap;
}

.mini-menu .head {
    color: #aaa;
    letter-spacing: 0;
}

.mini-menu svg {
    position: absolute;
    left: 5px;
    top: 3px;
}

.scrollbar {
    width: 20px;
    padding: 5px 4px 0 5px;
}

.thumb {
    height: 142px;
    border-radius: 6px;
    background: #bfbfbf;
}

/* Status bar */
.statusbar {
    display: flex;
    align-items: center;
    height: 35px;
    padding: 0 0 2px 32px;
    border-top: 3px solid #cbcacb;
    background: linear-gradient(#d8d7d8, #e2e0e2);
    color: #7a7a7a;
    font-size: 16.5px;
    letter-spacing: 0;
}

.pages {
    width: 524px;
}

.access {
    width: 208px;
    text-align: right;
    white-space: nowrap;
}

.views {
    display: flex;
    align-items: center;
    height: 31px;
    margin-left: 564px;
}

.focus {
    width: 69px;
    padding-left: 8px;
    font-weight: 500;
}

.view {
    display: flex;
    align-items: center;
    justify-content: center;
    width: 50px;
    height: 32px;
}

.view.on {
    background: #b1afb0;
}

.minus, .plus {
    font-size: 22px;
    font-weight: 700;
    width: 14px;
    text-align: center;
}

.minus {
    margin-left: 7px;
}

.slider {
    display: flex;
    align-items: center;
    width: 137px;
    height: 6px;
    margin: 0 9px;
    padding-left: 58px;
    border-radius: 3px;
    background: #a0a0a0;
}

.slider i {
    width: 23px;
    height: 23px;
    border-radius: 50%;
    background: #fff;
}

.zoom {
    margin-left: 23px;
}

/* Menus */
.menu {
    position: absolute;
    background: #e3e0df;
    box-shadow: 0 3px 14px rgba(0, 0, 0, 0.35);
    color: #222;
}

.menu hr {
    height: 2px;
    margin: 5px 20px 5px 19px;
    border: 0;
    background: #d5d2d1;
}

.item {
    position: relative;
    display: flex;
    align-items: center;
    height: 42px;
    padding: 0 0 2px 36px;
    font-family: "Liberation Sans", Arial, sans-serif;
    font-size: 20px;
    white-space: nowrap;
    -webkit-text-stroke: 0.3px;
}

.item svg {
    position: absolute;
    right: 20px;
    top: 14px;
    color: #333;
}

.item small {
    position: absolute;
    left: 380px;
    top: 19px;
    font-family: Inter, sans-serif;
    font-size: 14px;
    color: #555;
}

.font-menu {
    left: 144px;
    top: 150px;
    width: 519px;
    height: 1124px;
    padding-top: 6px;
    border-radius: 10px 10px 8px 8px;
}

.first-item {
    height: 38px;
    padding-left: 32px;
    padding-bottom: 0;
    font-family: Inter, sans-serif;
    font-size: 17.7px;
    color: #444;
}

.first-item svg {
    top: 11px;
}

.label {
    padding-left: 33px;
    font-family: Inter, sans-serif;
    font-size: 17.5px;
    color: #aaa8a8;
}

.theme {
    height: 33px;
    padding-bottom: 0;
}

.theme-row {
    height: 40px;
    padding-bottom: 1px;
}

.body-row {
    height: 42px;
}

.body-row small {
    top: 21px;
}

.menu .wide {
    margin-top: 9px;
    margin-bottom: 9px;
}

.recent {
    height: 29px;
}

.item.active {
    margin: 0 8px 0 6px;
    padding-left: 30px;
    padding-bottom: 3px;
    border-radius: 5px;
    background: #3e60b5;
    font-family: Roboto, sans-serif;
    color: #10182c;
}

.item.active svg {
    right: 12px;
    color: #e4ebf8;
}

.item .tick, .item.active .tick {
    left: 5px;
    right: auto;
}

.menu .mid {
    margin-top: 7px;
    margin-bottom: 6px;
}

.tall {
    height: 43px;
}

.narrow {
    transform: scaleX(0.77);
    transform-origin: 0 50%;
}

.f-academy {
    padding-bottom: 4px;
    font-family: "Liberation Serif", serif;
    font-size: 22px;
    letter-spacing: 0.2px;
    color: #444;
}

.f-typewriter {
    font-family: "DejaVu Serif", serif;
    font-size: 20.5px;
}

.f-mono {
    font-family: "DejaVu Sans Mono", monospace;
    font-size: 20px;
    letter-spacing: 0.8px;
    color: #333;
}

.f-angsana {
    font-family: "Liberation Serif", serif;
    font-size: 21px;
    font-weight: 700;
    -webkit-text-stroke: 0;
}

.f-chancery {
    height: 46px;
    font-family: "Liberation Serif", serif;
    font-style: italic;
    font-size: 21px;
    letter-spacing: -0.9px;
    color: #444;
}

.f-symbols {
    letter-spacing: -0.2px;
    word-spacing: 4px;
}

.f-rounded {
    font-weight: 700;
    letter-spacing: 0.1px;
    color: #111;
    -webkit-text-stroke: 0;
}

.f-athelas {
    font-family: "Liberation Serif", serif;
    font-size: 23px;
}

.f-avenir {
    letter-spacing: 0.6px;
    color: #333;
}

.cut {
    height: 14px;
    padding-top: 0;
    align-items: flex-start;
    line-height: 42px;
    overflow: hidden;
    letter-spacing: -1.6px;
    color: #666;
}

.scroll-down {
    display: flex;
    justify-content: center;
    padding: 7px 4px 0 0;
    color: #333;
}

/* Typeface submenu */
.sub-menu {
    left: 666px;
    top: 364px;
    width: 375px;
    height: 576px;
    padding-top: 7px;
    border-radius: 9px;
}

.sub-menu .item {
    font-family: Roboto, sans-serif;
    letter-spacing: 0.2px;
}

.sub-menu hr {
    margin: 8px 18px 6px 19px;
}

.sub-menu .tick {
    left: 11px;
    top: 15px;
}

.it {
    font-style: italic;
}

.sub-menu .thin {
    font-weight: 100;
    color: #666;
}

.sub-menu .light-face {
    font-weight: 300;
}

.sub-menu .medium {
    font-weight: 500;
    color: #111;
}

.sub-menu .bold {
    font-weight: 700;
    color: #111;
}

.sub-menu .black {
    font-weight: 900;
    color: #111;
}

/* Watermark */
.watermark {
    position: absolute;
    left: 154px;
    top: 1191px;
    display: flex;
    height: 56px;
    transform: rotate(-36.2deg);
    transform-origin: 0 100%;
    font-family: "Open Sans", sans-serif;
    font-size: 53.5px;
    font-weight: 300;
    line-height: 64px;
    white-space: nowrap;
    color: rgba(120, 120, 120, 0.09);
    pointer-events: none;
}

.watermark span {
    width: 299px;
}

.watermark .site {
    width: 395px;
}
```
